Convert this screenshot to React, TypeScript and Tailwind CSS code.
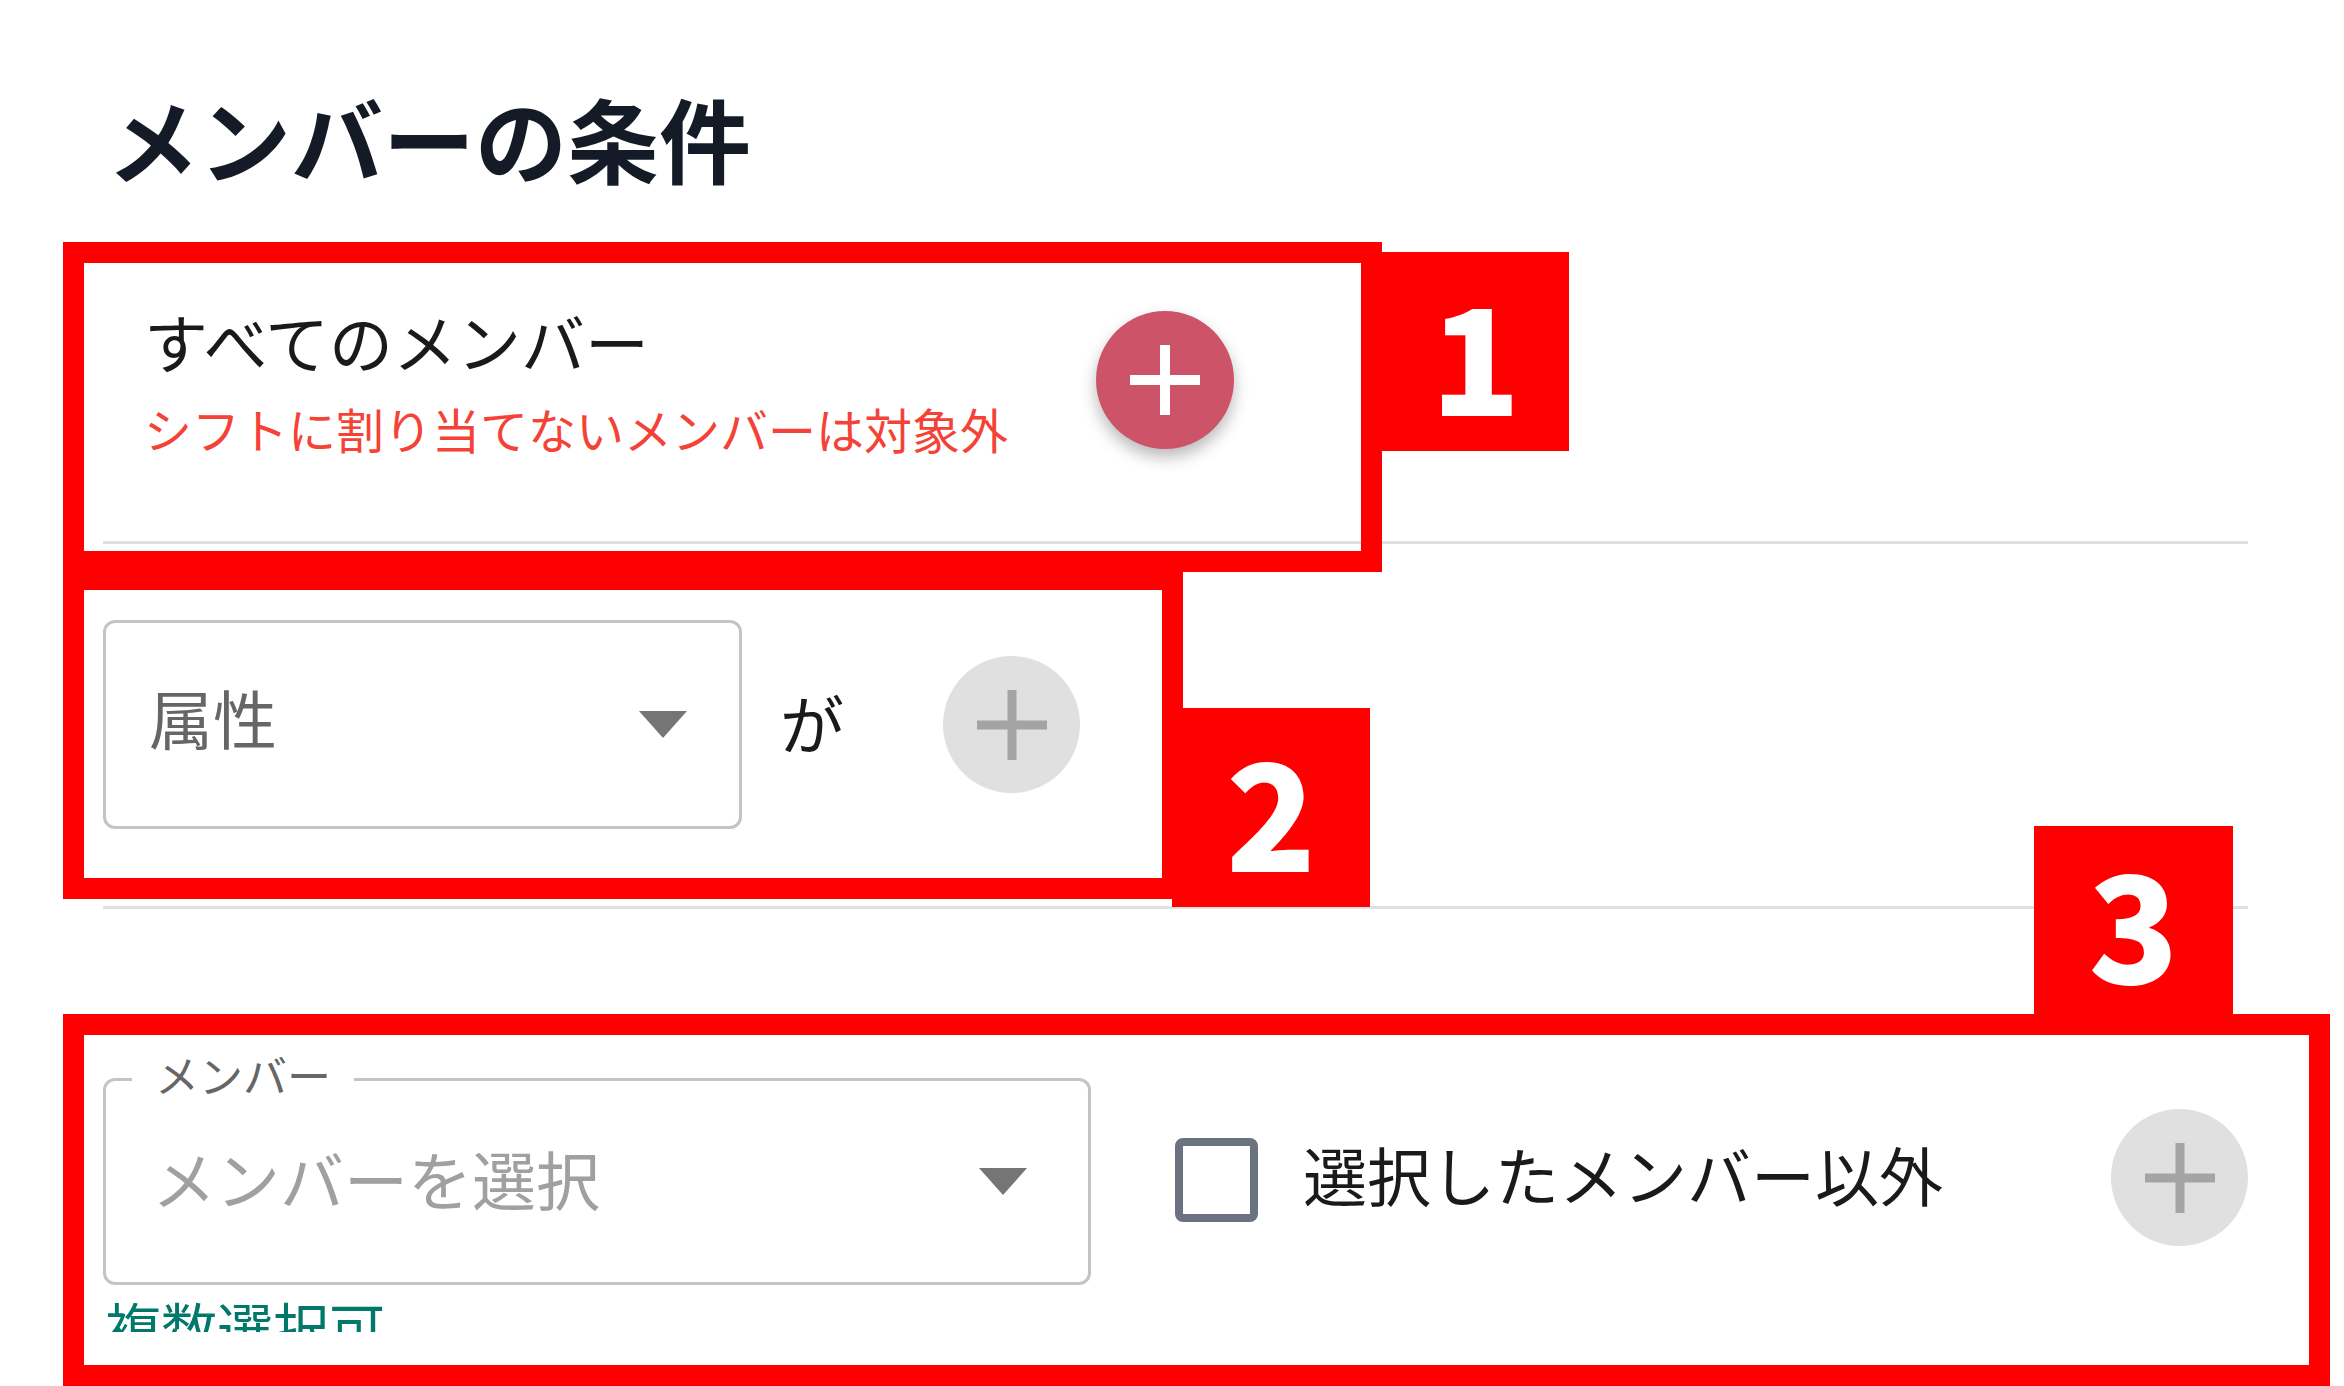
import React from "react";

function Plus({ size, bar, color }: { size: number; bar: number; color: string }) {
  const mid = (size - bar) / 2;
  return (
    <svg width={size} height={size} viewBox={`0 0 ${size} ${size}`}>
      <rect x={mid} y={0} width={bar} height={size} fill={color} />
      <rect x={0} y={mid} width={size} height={bar} fill={color} />
    </svg>
  );
}

function Caret() {
  return (
    <svg width="48" height="27" viewBox="0 0 48 27">
      <polygon points="0,0 48,0 24,27" fill="#757575" />
    </svg>
  );
}

function GreyAdd() {
  return (
    <button className="flex h-[137px] w-[137px] flex-none items-center justify-center rounded-full bg-[#e0e0e0]">
      <Plus size={70} bar={9} color="#a4a4a4" />
    </button>
  );
}

// red annotation frame drawn over the screenshot
function Frame({ className }: { className: string }) {
  return <div className={`pointer-events-none absolute border-[21px] border-[#ff0000] ${className}`} />;
}

function Tag({ n, className }: { n: string; className: string }) {
  return (
    <div
      className={`absolute flex items-center justify-center bg-[#ff0000] text-[148px] leading-none font-black text-white ${className}`}
    >
      {n}
    </div>
  );
}

export default function App() {
  return (
    <div className="relative h-[1386px] w-[2344px] overflow-hidden bg-white font-['Noto_Sans_CJK_JP',sans-serif]">
      <div className="h-[1332px] overflow-hidden pt-[91px] pr-[96px] pl-[103px]">
        <h1 className="ml-[4px] text-[92px] leading-none font-bold text-[#141a26]">メンバーの条件</h1>

        {/* all members */}
        <div className="mt-[125px] flex items-center border-b-[3px] border-[#e0e0e0] pb-[89px] pl-[41px]">
          <div className="w-[952px] flex-none">
            <p className="text-[64px] leading-none text-[#1a1a1a]">すべてのメンバー</p>
            <p className="mt-[32px] text-[48px] leading-none text-[#f44336]">
              シフトに割り当てないメンバーは対象外
            </p>
          </div>
          <button className="flex h-[138px] w-[138px] flex-none items-center justify-center rounded-full bg-[#cd5468] shadow-[0_8px_16px_rgba(0,0,0,0.28)]">
            <Plus size={70} bar={10} color="#ffffff" />
          </button>
        </div>

        {/* attribute */}
        <div className="flex items-center border-b-[3px] border-[#e0e0e0] pt-[76px] pb-[77px]">
          <div className="flex h-[209px] w-[639px] flex-none items-center justify-between rounded-[12px] border-[3px] border-[#c4c4c4] pr-[52px] pl-[43px]">
            <span className="mb-[18px] text-[64px] leading-none text-[#666666]">属性</span>
            <Caret />
          </div>
          <span className="mb-[8px] ml-[38px] text-[64px] leading-none text-[#1a1a1a]">が</span>
          <div className="ml-[99px]">
            <GreyAdd />
          </div>
        </div>

        {/* member select */}
        <div className="mt-[169px] flex items-center">
          <div className="relative flex h-[207px] w-[988px] flex-none items-center justify-between rounded-[12px] border-[3px] border-[#c4c4c4] pr-[61px] pl-[46px]">
            <span className="absolute top-[-29px] left-[26px] bg-white px-[23px] text-[44px] leading-none text-[#666666]">
              メンバー
            </span>
            <span className="mb-[10px] text-[64px] leading-none text-[#a0a0a0]">メンバーを選択</span>
            <Caret />
          </div>
          <div className="mb-[4px] ml-[84px] h-[84px] w-[83px] flex-none rounded-[8px] border-[8px] border-[#6b7280]" />
          <span className="mb-[18px] ml-[45px] text-[64px] leading-none text-[#1a1a1a]">選択したメンバー以外</span>
          <div className="mb-[8px] ml-auto">
            <GreyAdd />
          </div>
        </div>
        <p className="mt-[13px] ml-[2px] text-[56px] leading-none text-[#00796b]">複数選択可</p>
      </div>

      <Frame className="top-[242px] left-[63px] h-[330px] w-[1319px]" />
      <Frame className="top-[569px] left-[63px] h-[330px] w-[1120px]" />
      <Frame className="top-[1014px] left-[63px] h-[372px] w-[2267px]" />
      <Tag n="1" className="top-[252px] left-[1382px] h-[199px] w-[187px]" />
      <Tag n="2" className="top-[708px] left-[1172px] h-[199px] w-[198px]" />
      <Tag n="3" className="top-[826px] left-[2034px] h-[188px] w-[199px]" />
    </div>
  );
}
